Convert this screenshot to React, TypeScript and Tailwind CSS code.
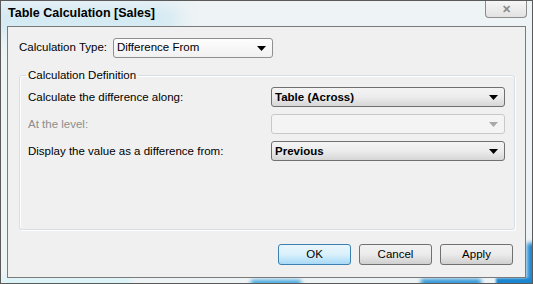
import React from 'react';

const ui = { fontFamily: '"Liberation Sans", Arial, sans-serif' };

function Arrow({ disabled }: { disabled?: boolean }) {
  return (
    <svg width="9" height="5" viewBox="0 0 9 5" className="shrink-0">
      <path d="M0 0 L9 0 L4.5 5 Z" fill={disabled ? '#a8a8a8' : '#000'} />
    </svg>
  );
}

// Vista style combo box
function Combo({ value, bold, disabled, plain, className }: { value?: string; bold?: boolean; disabled?: boolean; plain?: boolean; className: string }) {
  let look = 'border-[#707070] bg-gradient-to-b from-[#f4f4f4] via-[#ececec] to-[#d6d6d6]';
  if (plain) look = 'border-[#8e8f8f] bg-gradient-to-b from-[#fdfdfd] to-[#f1f1f1]';
  if (disabled) look = 'border-[#c9c9c9] bg-[#f4f4f4]';
  return (
    <div className={`flex h-[20px] items-center justify-between rounded-[3px] border pl-[3px] pr-[6px] ${look} ${className}`}>
      <span className={`text-[11.5px] text-black ${bold ? 'font-bold' : ''}`}>{value}</span>
      <Arrow disabled={disabled} />
    </div>
  );
}

function Button({ label, primary }: { label: string; primary?: boolean }) {
  const look = primary
    ? 'border-[#3c7fb1] bg-gradient-to-b from-[#eaf6fd] via-[#d9f0fc] to-[#a7d9f5]'
    : 'border-[#707070] bg-gradient-to-b from-[#f2f2f2] via-[#ebebeb] to-[#cfcfcf]';
  return (
    <div className={`flex h-[21px] w-[73px] items-center justify-center rounded-[3px] border text-[11.5px] text-black ${look}`}>
      {label}
    </div>
  );
}

export default function App() {
  return (
    <div style={ui} className="relative h-[284px] w-[533px] overflow-hidden border border-[#5a5a5a] bg-[#eef3f5]">
      {/* aero glass glows */}
      <div className="pointer-events-none absolute left-[-20px] top-[4px] h-[30px] w-[200px] rounded-full bg-[#bfe3f2] opacity-60 blur-[10px]" />
      <div className="pointer-events-none absolute bottom-[-4px] left-[0px] h-[10px] w-[130px] bg-[#d8f4f8] blur-[3px]" />
      <div className="pointer-events-none absolute bottom-[-3px] left-[250px] h-[6px] w-[50px] bg-[#3ba2dd] blur-[2px]" />
      <div className="pointer-events-none absolute bottom-[-3px] left-[420px] h-[7px] w-[60px] bg-[#2a93d6] blur-[2px]" />
      <div className="pointer-events-none absolute bottom-[-3px] right-[-4px] h-[8px] w-[40px] bg-[#1b86cf] blur-[1px]" />
      <div className="pointer-events-none absolute bottom-[0px] right-[-4px] h-[40px] w-[9px] bg-[#1b86cf] blur-[2px]" />

      {/* title bar */}
      <div className="relative flex h-[25px] items-center justify-between pl-[7px] pr-[5px]">
        <span className="text-[12.5px] font-bold text-black">Table Calculation [Sales]</span>
        <div className="flex h-[17px] w-[42px] items-center justify-center self-start rounded-b-[4px] border border-t-0 border-[#8c8c8c] bg-gradient-to-b from-[#f6f6f6] to-[#e2e2e2]">
          <span className="text-[11px] font-bold leading-none text-[#8a8a8a]">✕</span>
        </div>
      </div>

      {/* client area */}
      <div className="relative mx-[6px] flex h-[252px] flex-col border border-[#7a7a7a] bg-[#f0f0f0] pl-[11px] pr-[10px] pt-[11px]">
        <div className="flex items-center">
          <span className="w-[94px] text-[11.5px] text-black">Calculation Type:</span>
          <Combo value="Difference From" plain className="w-[160px]" />
        </div>

        {/* group box */}
        <fieldset className="mt-[9px] h-[163px] rounded-[3px] border border-[#d5dfe5] pl-[8px] pr-[9px] pt-[3px] shadow-[inset_1px_1px_0_#ffffff,1px_1px_0_#ffffff]">
          <legend className="ml-[-2px] px-[2px] text-[11.5px] text-black">Calculation Definition</legend>
          <div className="flex flex-col gap-[7px]">
            <div className="flex items-center justify-between">
              <span className="text-[11.5px] text-black">Calculate the difference along:</span>
              <Combo value="Table (Across)" bold className="w-[234px]" />
            </div>
            <div className="flex items-center justify-between">
              <span className="text-[11.5px] text-[#8d8d8d]">At the level:</span>
              <Combo disabled className="w-[234px]" />
            </div>
            <div className="flex items-center justify-between">
              <span className="text-[11.5px] text-black">Display the value as a difference from:</span>
              <Combo value="Previous" bold className="w-[234px]" />
            </div>
          </div>
        </fieldset>

        <div className="mt-[14px] flex justify-end gap-[8px] pr-[2px]">
          <Button label="OK" primary />
          <Button label="Cancel" />
          <Button label="Apply" />
        </div>
      </div>
    </div>
  );
}
